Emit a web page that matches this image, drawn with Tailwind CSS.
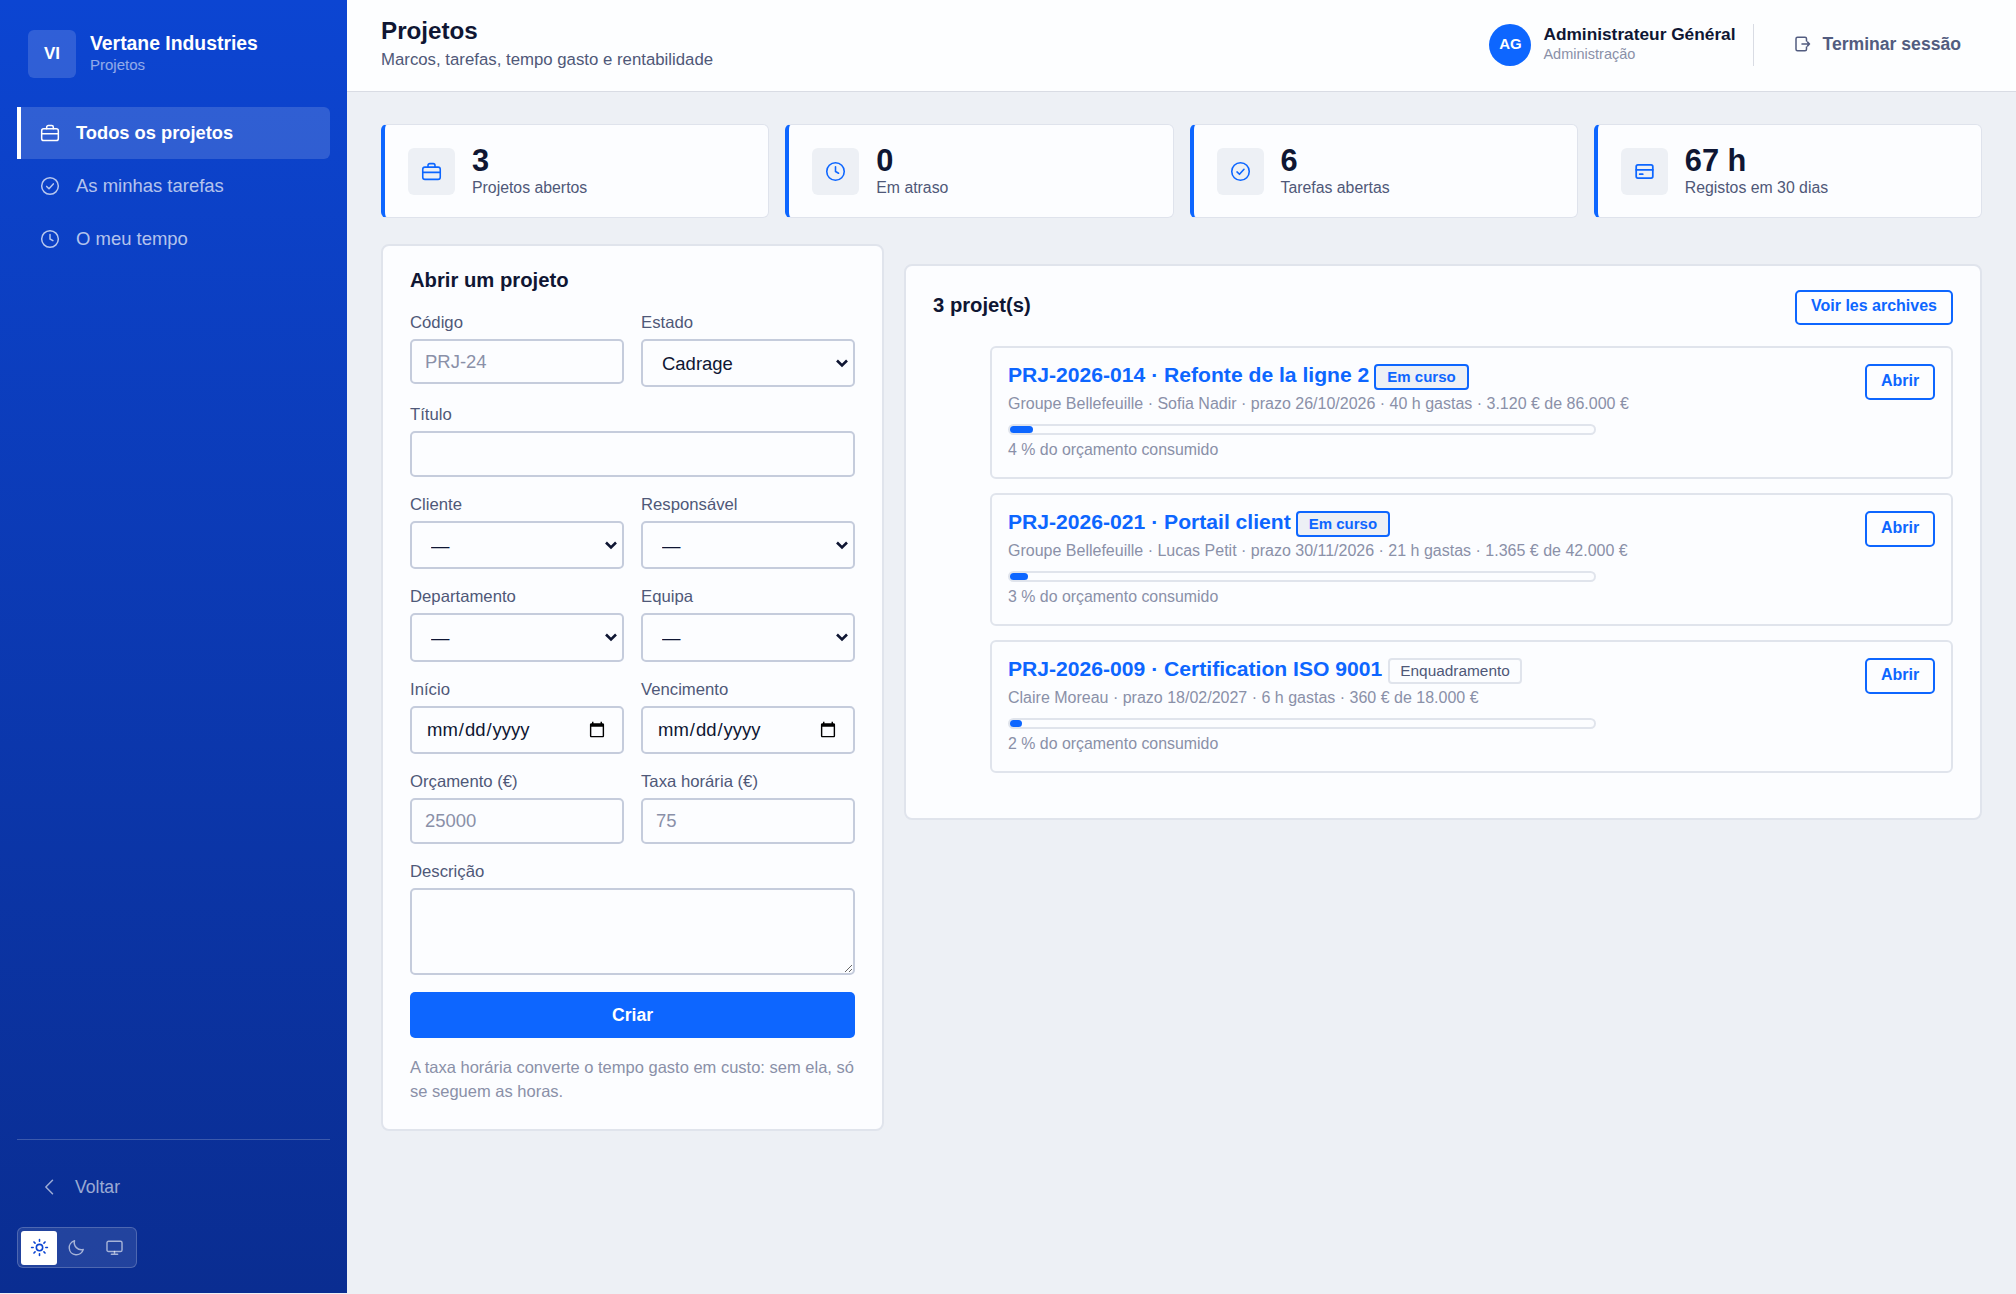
<!DOCTYPE html>
<html lang="pt">
  <head>
    <meta charset="utf-8" />
    <meta content="width=device-width, initial-scale=1.0" name="viewport" />
    <title>Projetos</title>
    <script src="https://cdn.jsdelivr.net/npm/@tailwindcss/browser@4"></script>
  </head>
  <body class="bg-[#edf0f5] font-['Liberation_Sans',Arial,sans-serif] text-[#0f1633]">
    <div class="flex h-[1293px] overflow-hidden">
      <!-- Sidebar -->
      <aside class="flex w-[347px] shrink-0 flex-col bg-gradient-to-b from-[#0c45d2] to-[#0a2d91] text-white">
        <div class="mt-[30px] flex h-[48px] items-center gap-[14px] pl-[28px]">
          <div class="flex h-[48px] w-[48px] items-center justify-center rounded-[6px] bg-white/15 text-[17px] font-bold">VI</div>
          <div class="pb-[2px]">
            <div class="text-[19.360px] leading-[24px] font-bold">Vertane Industries</div>
            <div class="text-[15px] leading-[20px] text-white/55">Projetos</div>
          </div>
        </div>
        <nav class="mt-[29px] flex flex-col gap-px px-[17px]">
          <a class="flex h-[52px] items-center gap-[16px] rounded-r-[6px] border-l-4 border-white bg-white/15 pl-[19px] text-[18.300px] font-bold">
            <svg class="h-[20px] w-[20px]" viewBox="0 0 24 24" fill="none" stroke="currentColor" stroke-width="1.8" stroke-linecap="round" stroke-linejoin="round"><rect x="2" y="7" width="20" height="14" rx="2.500" /><path d="M8 7V5a2 2 0 0 1 2-2h4a2 2 0 0 1 2 2v2M2 13h20" /></svg>
            Todos os projetos
          </a>
          <a class="flex h-[52px] items-center gap-[16px] pl-[23px] text-[18.480px] text-white/70">
            <svg class="h-[20px] w-[20px]" viewBox="0 0 24 24" fill="none" stroke="currentColor" stroke-width="1.8" stroke-linecap="round" stroke-linejoin="round"><circle cx="12" cy="12" r="10" /><path d="M8 12.500l2.800 2.700L16 9.500" /></svg>
            As minhas tarefas
          </a>
          <a class="flex h-[52px] items-center gap-[16px] pl-[23px] text-[18.480px] text-white/70">
            <svg class="h-[20px] w-[20px]" viewBox="0 0 24 24" fill="none" stroke="currentColor" stroke-width="1.8" stroke-linecap="round" stroke-linejoin="round"><circle cx="12" cy="12" r="10" /><path d="M12 6.500V12l3.500 2" /></svg>
            O meu tempo
          </a>
        </nav>
        <div class="mt-auto px-[17px] pb-[25px]">
          <div class="border-t border-white/20"></div>
          <a class="mt-[30px] flex h-[34px] items-center gap-[15px] pl-[23px] text-[17.600px] text-white/60">
            <svg class="h-[20px] w-[20px]" viewBox="0 0 24 24" fill="none" stroke="currentColor" stroke-width="1.8" stroke-linecap="round" stroke-linejoin="round"><path d="M15 4l-8 8 8 8" /></svg>
            Voltar
          </a>
          <div class="mt-[23px] flex h-[41px] w-[120px] items-center rounded-[6px] border border-white/20 bg-white/10 px-[3px]">
            <span class="flex h-[34px] w-[36px] items-center justify-center rounded-[3px] bg-white text-[#0c45d2]">
              <svg class="h-[19px] w-[19px]" viewBox="0 0 24 24" fill="none" stroke="currentColor" stroke-width="2" stroke-linecap="round"><circle cx="12" cy="12" r="4" /><path d="M12 2v2M12 20v2M2 12h2M20 12h2M5 5l1.400 1.400M17.600 17.600L19 19M5 19l1.400-1.400M17.600 6.400L19 5" /></svg>
            </span>
            <span class="flex h-[34px] w-[39px] items-center justify-center text-white/60">
              <svg class="h-[19px] w-[19px]" viewBox="0 0 24 24" fill="none" stroke="currentColor" stroke-width="1.8" stroke-linecap="round" stroke-linejoin="round"><path d="M20.500 14.500A9 9 0 0 1 9.500 3.500a9 9 0 1 0 11 11z" /></svg>
            </span>
            <span class="flex h-[34px] w-[37px] items-center justify-center text-white/60">
              <svg class="h-[19px] w-[19px]" viewBox="0 0 24 24" fill="none" stroke="currentColor" stroke-width="1.8" stroke-linecap="round" stroke-linejoin="round"><rect x="2.500" y="4" width="19" height="13" rx="2" /><path d="M12 17v3.500M8 20.500h8" /></svg>
            </span>
          </div>
        </div>
      </aside>

      <div class="flex min-w-0 flex-1 flex-col">
        <!-- Header -->
        <header class="flex h-[92px] shrink-0 items-center border-b border-[#d9dce4] bg-[#fdfeff] pr-[55px] pl-[34px]">
          <div class="flex-1 pb-[4px]">
            <h1 class="text-[24.200px] leading-[30px] font-bold">Projetos</h1>
            <p class="mt-[3px] text-[16.800px] leading-[22px] text-[#4f5878]">Marcos, tarefas, tempo gasto e rentabilidade</p>
          </div>
          <div class="mb-[2px] flex h-[42px] items-center">
            <div class="flex h-[42px] w-[42px] items-center justify-center rounded-full bg-[#0d66ff] text-[15px] font-bold text-white">AG</div>
            <div class="ml-[12px] flex h-[42px] w-[211px] flex-col justify-center border-r border-[#d9dce4] pb-[1px]">
              <div class="text-[17.300px] leading-[21px] font-bold">Administrateur Général</div>
              <div class="text-[14.500px] leading-[19px] text-[#8a90a8]">Administração</div>
            </div>
            <a class="ml-[39px] flex items-center gap-[11px] text-[17.600px] font-bold text-[#525c80]">
              <svg class="h-[18px] w-[18px]" viewBox="0 0 24 24" fill="none" stroke="currentColor" stroke-width="2" stroke-linecap="round" stroke-linejoin="round"><path d="M18 8V5a2 2 0 0 0-2-2H6a2 2 0 0 0-2 2v14a2 2 0 0 0 2 2h10a2 2 0 0 0 2-2v-3M12 12h10M19.500 9.500L22 12l-2.500 2.500" /></svg>
              Terminar sessão
            </a>
          </div>
        </header>

        <main class="px-[34px] pt-[32px]">
          <!-- Stats -->
          <div class="grid grid-cols-4 gap-[16px]">
            <div class="flex h-[94px] items-center gap-[17px] rounded-[6px] border border-l-4 border-[#dfe3ec] border-l-[#0d66ff] bg-[#fcfdff] pl-[23px]">
              <span class="flex h-[47px] w-[47px] items-center justify-center rounded-[6px] bg-[#edf0f5] text-[#0d66ff]">
                <svg class="h-[21px] w-[21px]" viewBox="0 0 24 24" fill="none" stroke="currentColor" stroke-width="1.8" stroke-linecap="round" stroke-linejoin="round"><rect x="2" y="7" width="20" height="14" rx="2.500" /><path d="M8 7V5a2 2 0 0 1 2-2h4a2 2 0 0 1 2 2v2M2 13h20" /></svg>
              </span>
              <div>
                <div class="text-[30.800px] leading-[34px] font-bold">3</div>
                <div class="text-[15.840px] leading-[20px] text-[#4f5878]">Projetos abertos</div>
              </div>
            </div>
            <div class="flex h-[94px] items-center gap-[17px] rounded-[6px] border border-l-4 border-[#dfe3ec] border-l-[#0d66ff] bg-[#fcfdff] pl-[23px]">
              <span class="flex h-[47px] w-[47px] items-center justify-center rounded-[6px] bg-[#edf0f5] text-[#0d66ff]">
                <svg class="h-[21px] w-[21px]" viewBox="0 0 24 24" fill="none" stroke="currentColor" stroke-width="1.8" stroke-linecap="round" stroke-linejoin="round"><circle cx="12" cy="12" r="10" /><path d="M12 6.500V12l3.500 2" /></svg>
              </span>
              <div>
                <div class="text-[30.800px] leading-[34px] font-bold">0</div>
                <div class="text-[15.840px] leading-[20px] text-[#4f5878]">Em atraso</div>
              </div>
            </div>
            <div class="flex h-[94px] items-center gap-[17px] rounded-[6px] border border-l-4 border-[#dfe3ec] border-l-[#0d66ff] bg-[#fcfdff] pl-[23px]">
              <span class="flex h-[47px] w-[47px] items-center justify-center rounded-[6px] bg-[#edf0f5] text-[#0d66ff]">
                <svg class="h-[21px] w-[21px]" viewBox="0 0 24 24" fill="none" stroke="currentColor" stroke-width="1.8" stroke-linecap="round" stroke-linejoin="round"><circle cx="12" cy="12" r="10" /><path d="M8 12.500l2.800 2.700L16 9.500" /></svg>
              </span>
              <div>
                <div class="text-[30.800px] leading-[34px] font-bold">6</div>
                <div class="text-[15.840px] leading-[20px] text-[#4f5878]">Tarefas abertas</div>
              </div>
            </div>
            <div class="flex h-[94px] items-center gap-[17px] rounded-[6px] border border-l-4 border-[#dfe3ec] border-l-[#0d66ff] bg-[#fcfdff] pl-[23px]">
              <span class="flex h-[47px] w-[47px] items-center justify-center rounded-[6px] bg-[#edf0f5] text-[#0d66ff]">
                <svg class="h-[21px] w-[21px]" viewBox="0 0 24 24" fill="none" stroke="currentColor" stroke-width="2" stroke-linecap="round" stroke-linejoin="round"><rect x="2.500" y="4.500" width="19" height="15" rx="2" /><path d="M2.500 10h19M6.500 15h3.500" /></svg>
              </span>
              <div>
                <div class="text-[30.800px] leading-[34px] font-bold">67 h</div>
                <div class="text-[15.840px] leading-[20px] text-[#4f5878]">Registos em 30 dias</div>
              </div>
            </div>
          </div>

          <div class="mt-[26px] flex items-start gap-[20px]">
            <!-- Form -->
            <section class="h-[887px] w-[503px] shrink-0 rounded-[8px] border-2 border-[#e0e4ec] bg-[#fcfdff] px-[27px] pt-[21px]">
              <h2 class="text-[20.240px] leading-[26px] font-bold">Abrir um projeto</h2>
              <div class="mt-[19px] grid grid-cols-2 gap-x-[17px] gap-y-[17px]">
                <label class="block">
                  <span class="mb-[5px] block text-[16.720px] leading-[22px] text-[#4f5878]">Código</span>
                  <input class="h-[45px] w-full rounded-[5px] border-2 border-[#c5ccdc] bg-[#fcfdff] px-[13px] text-[18.480px] placeholder:text-[#8a90a8]" placeholder="PRJ-24" />
                </label>
                <label class="block">
                  <span class="mb-[5px] block text-[16.720px] leading-[22px] text-[#4f5878]">Estado</span>
                  <span class="relative block">
                    <select class="block h-[48px] w-full appearance-none rounded-[5px] border-2 border-[#c5ccdc] bg-[#fcfdff] px-[19px] pt-[1px] text-[18.480px]"><option>Cadrage</option></select>
                    <svg class="pointer-events-none absolute top-[19px] right-[7px] h-[10px] w-[12px]" viewBox="0 0 12 10" fill="none" stroke="#0f1633" stroke-width="2.600"><path d="M1 2.500l5 5 5-5" /></svg>
                  </span>
                </label>
                <label class="col-span-2 block">
                  <span class="mb-[5px] block text-[16.720px] leading-[22px] text-[#4f5878]">Título</span>
                  <input class="h-[46px] w-full rounded-[5px] border-2 border-[#c5ccdc] bg-[#fcfdff] px-[13px] text-[18.480px]" />
                </label>
                <label class="block">
                  <span class="mb-[5px] block text-[16.720px] leading-[22px] text-[#4f5878]">Cliente</span>
                  <span class="relative block">
                    <select class="block h-[48px] w-full appearance-none rounded-[5px] border-2 border-[#c5ccdc] bg-[#fcfdff] px-[19px] pt-[1px] text-[18.480px]"><option>—</option></select>
                    <svg class="pointer-events-none absolute top-[19px] right-[7px] h-[10px] w-[12px]" viewBox="0 0 12 10" fill="none" stroke="#0f1633" stroke-width="2.600"><path d="M1 2.500l5 5 5-5" /></svg>
                  </span>
                </label>
                <label class="block">
                  <span class="mb-[5px] block text-[16.720px] leading-[22px] text-[#4f5878]">Responsável</span>
                  <span class="relative block">
                    <select class="block h-[48px] w-full appearance-none rounded-[5px] border-2 border-[#c5ccdc] bg-[#fcfdff] px-[19px] pt-[1px] text-[18.480px]"><option>—</option></select>
                    <svg class="pointer-events-none absolute top-[19px] right-[7px] h-[10px] w-[12px]" viewBox="0 0 12 10" fill="none" stroke="#0f1633" stroke-width="2.600"><path d="M1 2.500l5 5 5-5" /></svg>
                  </span>
                </label>
                <label class="block">
                  <span class="mb-[5px] block text-[16.720px] leading-[22px] text-[#4f5878]">Departamento</span>
                  <span class="relative block">
                    <select class="block h-[49px] w-full appearance-none rounded-[5px] border-2 border-[#c5ccdc] bg-[#fcfdff] px-[19px] pt-[1px] text-[18.480px]"><option>—</option></select>
                    <svg class="pointer-events-none absolute top-[19px] right-[7px] h-[10px] w-[12px]" viewBox="0 0 12 10" fill="none" stroke="#0f1633" stroke-width="2.600"><path d="M1 2.500l5 5 5-5" /></svg>
                  </span>
                </label>
                <label class="block">
                  <span class="mb-[5px] block text-[16.720px] leading-[22px] text-[#4f5878]">Equipa</span>
                  <span class="relative block">
                    <select class="block h-[49px] w-full appearance-none rounded-[5px] border-2 border-[#c5ccdc] bg-[#fcfdff] px-[19px] pt-[1px] text-[18.480px]"><option>—</option></select>
                    <svg class="pointer-events-none absolute top-[19px] right-[7px] h-[10px] w-[12px]" viewBox="0 0 12 10" fill="none" stroke="#0f1633" stroke-width="2.600"><path d="M1 2.500l5 5 5-5" /></svg>
                  </span>
                </label>
                <label class="block">
                  <span class="mb-[5px] block text-[16.720px] leading-[22px] text-[#4f5878]">Início</span>
                  <input type="date" class="h-[48px] w-full rounded-[5px] border-2 border-[#c5ccdc] bg-[#fcfdff] px-[14px] text-[18.480px]" />
                </label>
                <label class="block">
                  <span class="mb-[5px] block text-[16.720px] leading-[22px] text-[#4f5878]">Vencimento</span>
                  <input type="date" class="h-[48px] w-full rounded-[5px] border-2 border-[#c5ccdc] bg-[#fcfdff] px-[14px] text-[18.480px]" />
                </label>
                <label class="block">
                  <span class="mb-[5px] block text-[16.720px] leading-[22px] text-[#4f5878]">Orçamento (€)</span>
                  <input class="h-[46px] w-full rounded-[5px] border-2 border-[#c5ccdc] bg-[#fcfdff] px-[13px] text-[18.480px] placeholder:text-[#8a90a8]" placeholder="25000" />
                </label>
                <label class="block">
                  <span class="mb-[5px] block text-[16.720px] leading-[22px] text-[#4f5878]">Taxa horária (€)</span>
                  <input class="h-[46px] w-full rounded-[5px] border-2 border-[#c5ccdc] bg-[#fcfdff] px-[13px] text-[18.480px] placeholder:text-[#8a90a8]" placeholder="75" />
                </label>
                <label class="col-span-2 block">
                  <span class="mb-[5px] block text-[16.720px] leading-[22px] text-[#4f5878]">Descrição</span>
                  <textarea class="block h-[87px] w-full rounded-[5px] border-2 border-[#c5ccdc] bg-[#fcfdff] px-[13px]"></textarea>
                </label>
              </div>
              <button class="mt-[17px] h-[46px] w-full rounded-[5px] bg-[#0d66ff] text-[17.600px] font-bold text-white">Criar</button>
              <p class="mt-[17px] text-[16.500px] leading-[24px] text-[#8a90a8]">A taxa horária converte o tempo gasto em custo: sem ela, só se seguem as horas.</p>
            </section>

            <!-- Project list -->
            <section class="mt-[20px] h-[556px] min-w-0 flex-1 rounded-[8px] border-2 border-[#e0e4ec] bg-[#fcfdff] px-[27px] pt-[24px]">
              <div class="flex h-[35px] items-center justify-between">
                <h2 class="mb-[4px] text-[20.240px] font-bold">3 projet(s)</h2>
                <a class="flex h-[35px] w-[158px] items-center justify-center rounded-[5px] border-2 border-[#0d66ff] pb-[3px] text-[16px] font-bold text-[#0d66ff]">Voir les archives</a>
              </div>
              <ul class="mt-[21px] flex flex-col gap-[14px] pl-[57px]">
                <li class="flex h-[133px] items-start justify-between rounded-[6px] border-2 border-[#e0e4ec] px-[16px] pt-[14px]">
                  <div class="w-[660px] shrink-0">
                    <div class="flex h-[26px] items-center gap-[5px] whitespace-nowrap">
                      <a class="text-[21.120px] font-bold text-[#0d66ff]">PRJ-2026-014 · Refonte de la ligne 2</a>
                      <span class="flex h-[26px] translate-y-[2px] items-center rounded-[4px] border-2 border-[#0d66ff] bg-[#edf0f5] px-[11px] text-[15px] font-bold text-[#0d66ff]">Em curso</span>
                    </div>
                    <p class="mt-[6px] text-[16px] leading-[20px] text-[#8a90a8]">Groupe Bellefeuille · Sofia Nadir · prazo 26/10/2026 · 40 h gastas · 3.120 € de 86.000 €</p>
                    <div class="mt-[10px] h-[11px] w-[588px] rounded-full border-2 border-[#e0e4ec]">
                      <div class="h-[7px] rounded-full bg-[#0d66ff]" style="width: 4%"></div>
                    </div>
                    <p class="mt-[5px] text-[15.900px] leading-[20px] text-[#8a90a8]">4 % do orçamento consumido</p>
                  </div>
                  <a class="mt-[2px] flex h-[36px] w-[70px] items-center justify-center rounded-[5px] border-2 border-[#0d66ff] pb-[3px] text-[16px] font-bold text-[#0d66ff]">Abrir</a>
                </li>
                <li class="flex h-[133px] items-start justify-between rounded-[6px] border-2 border-[#e0e4ec] px-[16px] pt-[14px]">
                  <div class="w-[660px] shrink-0">
                    <div class="flex h-[26px] items-center gap-[5px] whitespace-nowrap">
                      <a class="text-[21.120px] font-bold text-[#0d66ff]">PRJ-2026-021 · Portail client</a>
                      <span class="flex h-[26px] translate-y-[2px] items-center rounded-[4px] border-2 border-[#0d66ff] bg-[#edf0f5] px-[11px] text-[15px] font-bold text-[#0d66ff]">Em curso</span>
                    </div>
                    <p class="mt-[6px] text-[16px] leading-[20px] text-[#8a90a8]">Groupe Bellefeuille · Lucas Petit · prazo 30/11/2026 · 21 h gastas · 1.365 € de 42.000 €</p>
                    <div class="mt-[10px] h-[11px] w-[588px] rounded-full border-2 border-[#e0e4ec]">
                      <div class="h-[7px] rounded-full bg-[#0d66ff]" style="width: 3%"></div>
                    </div>
                    <p class="mt-[5px] text-[15.900px] leading-[20px] text-[#8a90a8]">3 % do orçamento consumido</p>
                  </div>
                  <a class="mt-[2px] flex h-[36px] w-[70px] items-center justify-center rounded-[5px] border-2 border-[#0d66ff] pb-[3px] text-[16px] font-bold text-[#0d66ff]">Abrir</a>
                </li>
                <li class="flex h-[133px] items-start justify-between rounded-[6px] border-2 border-[#e0e4ec] px-[16px] pt-[14px]">
                  <div class="w-[660px] shrink-0">
                    <div class="flex h-[26px] items-center gap-[6px] whitespace-nowrap">
                      <a class="text-[21.120px] font-bold text-[#0d66ff]">PRJ-2026-009 · Certification ISO 9001</a>
                      <span class="flex h-[26px] translate-y-[2px] items-center rounded-[4px] border-2 border-[#e0e4ec] bg-[#fcfdff] px-[10px] text-[15.400px] text-[#4f5878]">Enquadramento</span>
                    </div>
                    <p class="mt-[6px] text-[16px] leading-[20px] text-[#8a90a8]">Claire Moreau · prazo 18/02/2027 · 6 h gastas · 360 € de 18.000 €</p>
                    <div class="mt-[10px] h-[11px] w-[588px] rounded-full border-2 border-[#e0e4ec]">
                      <div class="h-[7px] rounded-full bg-[#0d66ff]" style="width: 2%"></div>
                    </div>
                    <p class="mt-[5px] text-[15.900px] leading-[20px] text-[#8a90a8]">2 % do orçamento consumido</p>
                  </div>
                  <a class="mt-[2px] flex h-[36px] w-[70px] items-center justify-center rounded-[5px] border-2 border-[#0d66ff] pb-[3px] text-[16px] font-bold text-[#0d66ff]">Abrir</a>
                </li>
              </ul>
            </section>
          </div>
        </main>
      </div>
    </div>
  </body>
</html>
